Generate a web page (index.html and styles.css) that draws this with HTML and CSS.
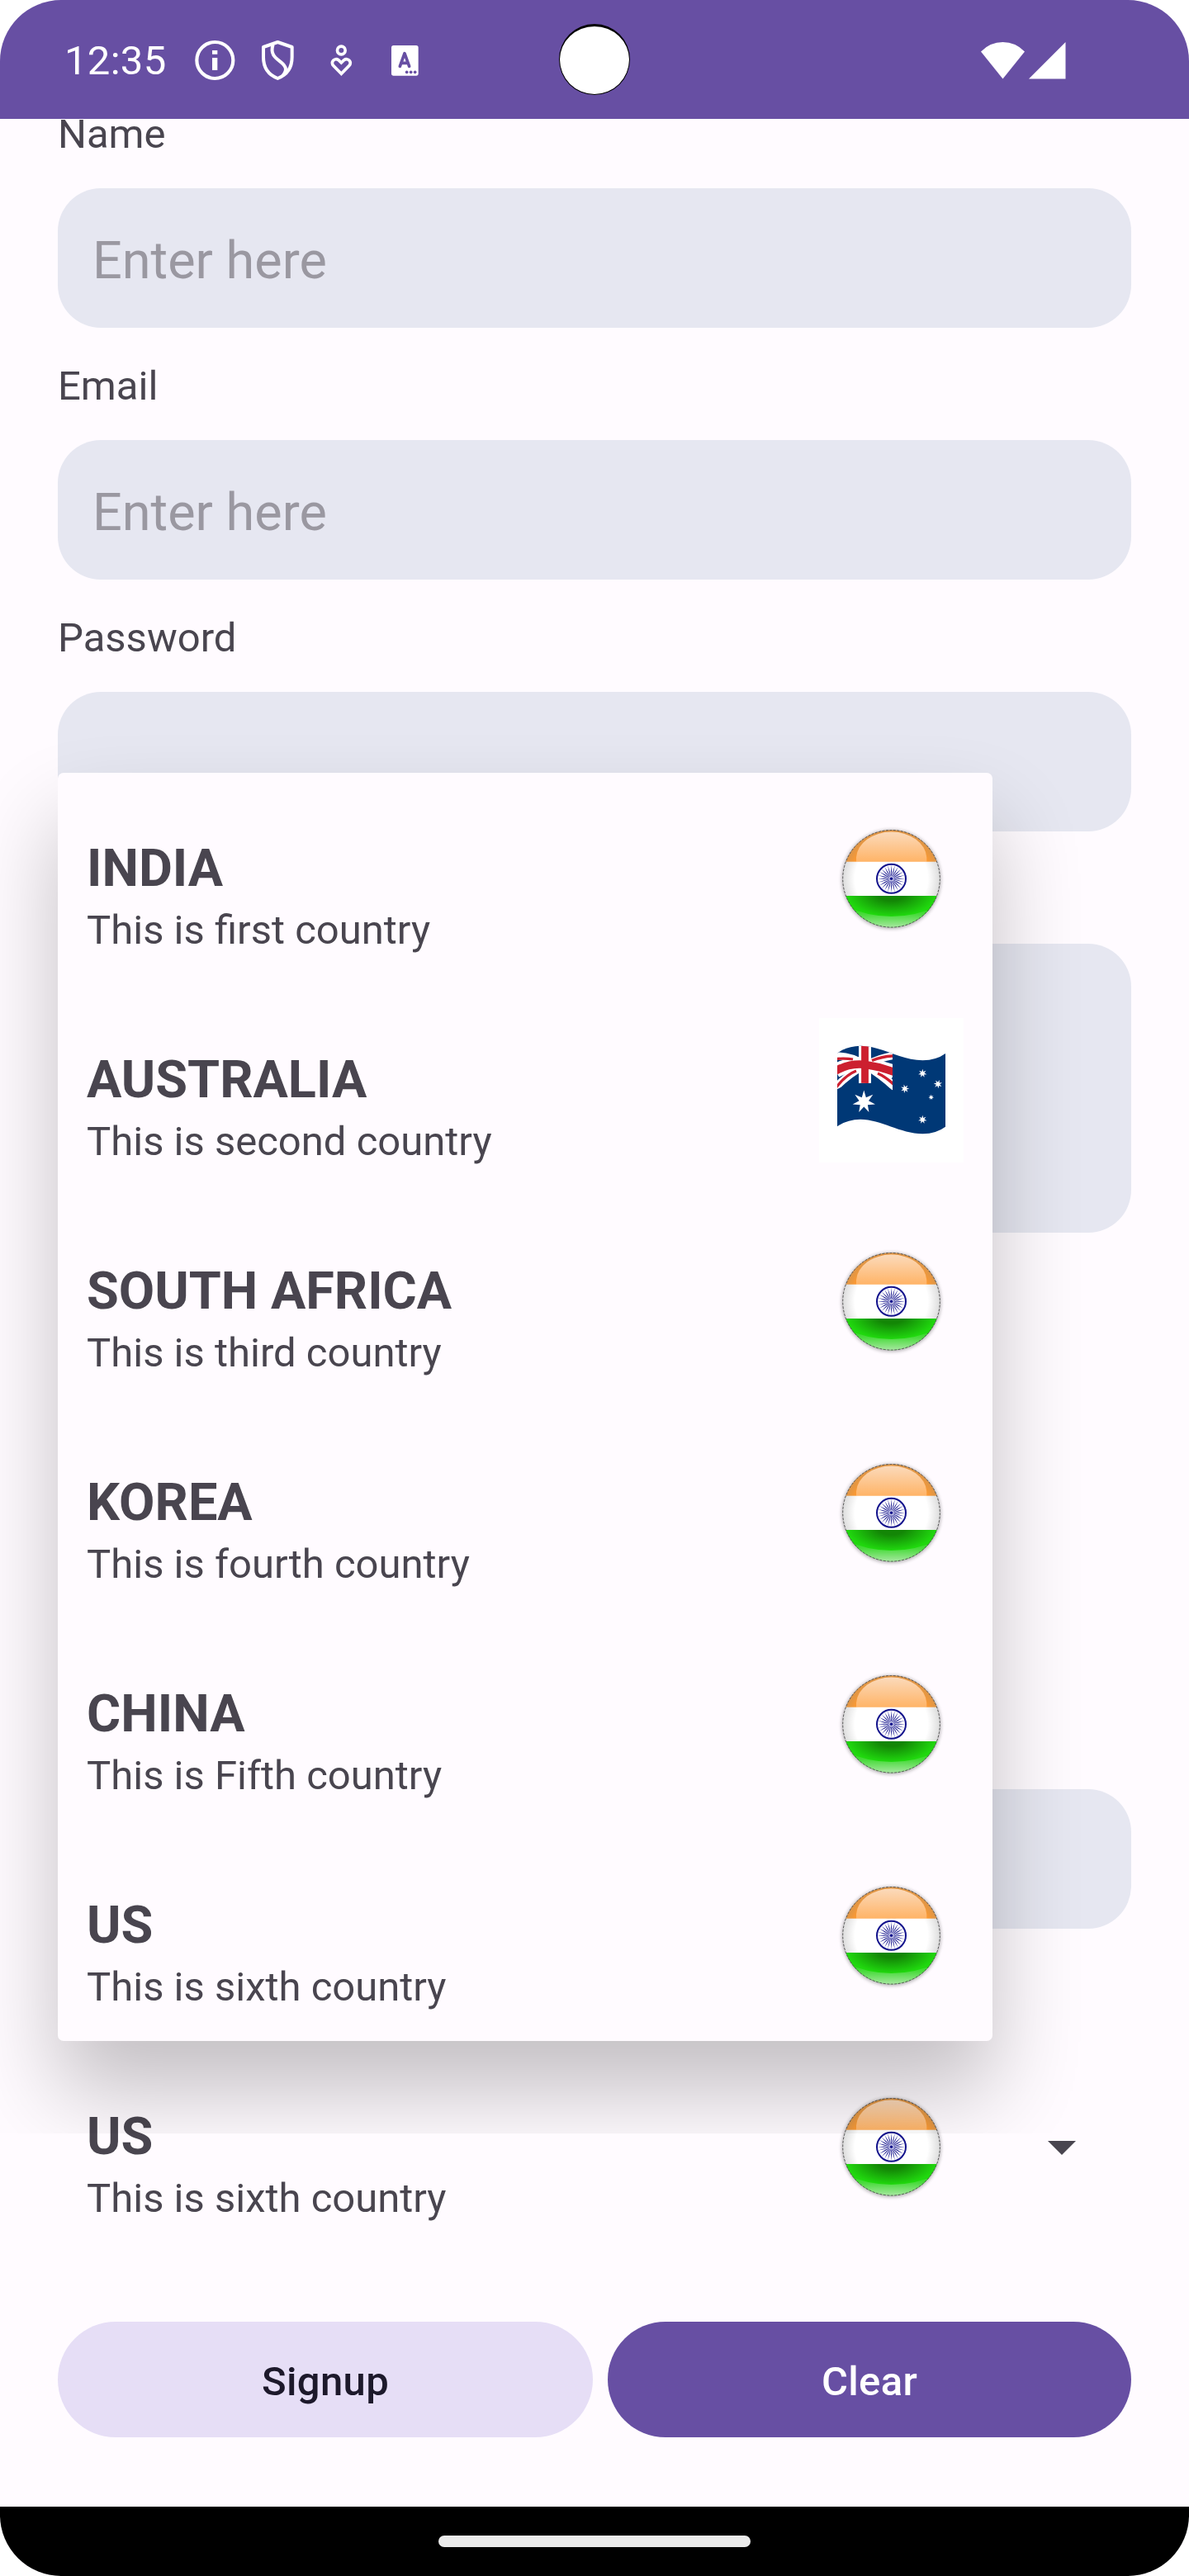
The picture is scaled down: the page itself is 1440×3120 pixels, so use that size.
FILE: index.html
```html
<!DOCTYPE html>
<html lang="en">
<head>
<meta charset="utf-8">
<title>Signup</title>
<link rel="stylesheet" href="styles.css">
</head>
<body>
<svg class="defs" width="0" height="0" aria-hidden="true">
  <defs>
    <linearGradient id="gloss" x1="0" y1="0" x2="0" y2="1"><stop offset="0" stop-color="#fbdabb"/><stop offset="1" stop-color="#ffb467"/></linearGradient>
    <radialGradient id="saffron" gradientUnits="userSpaceOnUse" cx="87.5" cy="87.3" r="59"><stop offset=".8" stop-color="#ff9a30"/><stop offset="1" stop-color="#dc9548"/></radialGradient>
    <radialGradient id="white" gradientUnits="userSpaceOnUse" cx="87.5" cy="87.3" r="59"><stop offset=".75" stop-color="#fff"/><stop offset="1" stop-color="#dcdcdc"/></radialGradient>
    <radialGradient id="green" gradientUnits="userSpaceOnUse" cx="0" cy="0" r="1" gradientTransform="translate(87.5 106) scale(54 27)"><stop offset=".3" stop-color="#138606"/><stop offset="1" stop-color="#20d80e"/></radialGradient>
    <linearGradient id="sheen" gradientUnits="userSpaceOnUse" x1="0" y1="120" x2="0" y2="147"><stop offset="0" stop-color="#22d610"/><stop offset=".4" stop-color="#4adb3d"/><stop offset="1" stop-color="#abe8a5"/></linearGradient>
    <filter id="halo" x="-20%" y="-20%" width="140%" height="140%"><feGaussianBlur stdDeviation="2"/></filter>
    <clipPath id="ball"><circle cx="87.5" cy="87.3" r="59"/></clipPath>
    <clipPath id="canton"><path d="M22 42.5Q34 34 50 33.8C64 33.8 76 38.5 89 43.3V87.5Q76 77 58 79Q40 77 22 86Z"/></clipPath>
    <path id="star7" d="M0-1L.182-.378.782-.623.409-.093.975.223.328.262.434.901 0 .42-.434.901-.328.262-.975.223-.409-.093-.782-.623-.182-.378Z"/>
    <path id="spokes" d="M0-17L.5-9 .15 0 .5 9 0 17-.5 9-.15 0-.5-9Z"/>
    <symbol id="india" viewBox="0 0 175 175">
      <circle cx="87.5" cy="88" r="60" fill="#000" opacity=".3" filter="url(#halo)"/>
      <g clip-path="url(#ball)">
        <rect x="28" y="28" width="120" height="39" fill="url(#saffron)"/>
        <path d="M45 66.7V61.5A42.7 32.5 0 0 1 130.3 61.5V66.7Z" fill="url(#gloss)"/>
        <rect x="28" y="66.7" width="120" height="41.5" fill="url(#white)"/>
        <rect x="28" y="108" width="120" height="40" fill="url(#green)"/>
        <path d="M28 119Q58 133 87.5 133T148 119V148H28Z" fill="url(#sheen)"/>
      </g>
      <circle cx="87.5" cy="87.3" r="58.8" fill="none" stroke="#555" stroke-width="1" stroke-dasharray="3 1.5"/>
      <g transform="translate(87.5 87.3)" fill="#12128c">
        <circle r="17.5" fill="none" stroke="#12128c" stroke-width="2"/>
        <circle r="4.5" fill="#c3c3e6"/>
        <use href="#spokes"/><use href="#spokes" transform="rotate(15)"/><use href="#spokes" transform="rotate(30)"/><use href="#spokes" transform="rotate(45)"/><use href="#spokes" transform="rotate(60)"/><use href="#spokes" transform="rotate(75)"/><use href="#spokes" transform="rotate(90)"/><use href="#spokes" transform="rotate(105)"/><use href="#spokes" transform="rotate(120)"/><use href="#spokes" transform="rotate(135)"/><use href="#spokes" transform="rotate(150)"/><use href="#spokes" transform="rotate(165)"/>
        <circle r="3.3" fill="#c3c3e6"/>
        <circle r="4" fill="none" stroke="#8f8fcc" stroke-width="1"/>
        <circle r="1.8"/>
      </g>
    </symbol>
    <symbol id="australia" viewBox="0 0 175 175">
      <rect width="175" height="175" fill="#fff"/>
      <path d="M22 42.5Q34 34 50 33.8C75 33.5 98 51 125.5 51.3Q142 51 153 43V131.7Q142 140 125.5 140.3C98 140 75 123 50 122.8Q34 123 22 131.3Z" fill="#003876"/>
      <g clip-path="url(#canton)" fill="none">
        <g stroke="#fff">
          <path d="M20 46Q38 45 56 57" stroke-width="9"/>
          <path d="M91 45.5Q76 47 56 57" stroke-width="9"/>
          <path d="M18 86Q35 68 56 57" stroke-width="9"/>
          <path d="M92 84Q75 68 56 57" stroke-width="10"/>
          <path d="M20 64Q38 54 56 56.5T91 65.5" stroke-width="17"/>
          <path d="M55.5 30V90" stroke-width="15"/>
        </g>
        <g stroke="#cc1f2f">
          <path d="M20 49.5Q32 48.5 41 50" stroke-width="3.2"/>
          <path d="M64 51.5Q76 46.5 90 46" stroke-width="3.5"/>
          <path d="M20 85Q32 69 45 64" stroke-width="3.2"/>
          <path d="M71 67Q80 71 90 80" stroke-width="3.5"/>
          <path d="M20 64Q38 54 56 56.5T91 65.5" stroke-width="9.6"/>
          <path d="M55.5 30V90" stroke-width="8.8"/>
        </g>
      </g>
      <g fill="#fff">
        <use href="#star7" transform="translate(54.3 101.5) scale(14)"/>
        <use href="#star7" transform="translate(125.3 67) scale(5.3)"/>
        <use href="#star7" transform="translate(144 80) rotate(20) scale(5.3)"/>
        <use href="#star7" transform="translate(104 85.7) rotate(-15) scale(5.3)"/>
        <use href="#star7" transform="translate(135.7 96) scale(3.4)"/>
        <use href="#star7" transform="translate(125.3 123) scale(5.3)"/>
      </g>
    </symbol>
  </defs>
</svg>

<div class="phone">
  <header class="status">
    <span class="clock">12:35</span>
    <svg class="sicon" viewBox="0 0 230 198">
      <circle cx="115" cy="99" r="66" fill="none" stroke="#fff" stroke-width="12.5"/>
      <path d="M105 63h19v14h-19zM105 90h19v45h-19z" fill="#fff"/>
    </svg>
    <svg class="sicon" viewBox="0 0 230 198">
      <g fill="none" stroke="#fff" stroke-width="12" stroke-linejoin="round">
        <path d="M115 33L167 51V88C167 125 149 152 115 165C81 152 63 125 63 88V51Z"/>
        <path d="M98 42C86 78 108 91 127 106C148 123 149 136 133 155"/>
      </g>
    </svg>
    <svg class="sicon" viewBox="0 0 230 198">
      <g fill="none" stroke="#fff" stroke-width="11">
        <circle cx="115" cy="63" r="14.5"/>
        <path d="M115 148L87 119C74 105 91 88 105 98L115 108L125 98C139 88 156 105 143 119Z"/>
      </g>
    </svg>
    <svg class="sicon" viewBox="0 0 230 198">
      <rect x="66" y="45" width="98" height="110" rx="8" fill="#fff"/>
      <path d="M97 121L114 74L131 121M102 109H126" fill="none" stroke="#674fa3" stroke-width="11" stroke-linecap="round" stroke-linejoin="round"/>
      <g fill="#674fa3"><circle cx="122" cy="142" r="5.5"/><circle cx="137" cy="142" r="5.5"/><circle cx="152" cy="142" r="5.5"/></g>
    </svg>
    <span class="camera"></span>
    <svg class="signal" viewBox="0 0 104 46" fill="#fff">
      <path d="M0 12.5Q11 1 26.5 1T53 12.5L26.5 45.5Z"/>
      <path d="M102.5 1V45.5H58Z"/>
    </svg>
  </header>

  <main class="form">
    <label class="label">Name</label>
    <div class="field">Enter here</div>
    <label class="label">Email</label>
    <div class="field">Enter here</div>
    <label class="label">Password</label>
    <div class="field"></div>
    <div class="field area"></div>
    <div class="field lower"></div>

    <div class="country spinner">
      <div class="words"><div class="title">US</div><div class="sub">This is sixth country</div></div>
      <svg class="flag"><use href="#india"/></svg>
      <svg class="arrow" viewBox="0 0 34 17"><path d="M0 0H34L17 17Z" fill="#49454f"/></svg>
    </div>

    <div class="actions">
      <button class="btn tonal">Signup</button>
      <button class="btn filled">Clear</button>
    </div>

    <div class="popup">
      <div class="country"><div class="words"><div class="title">INDIA</div><div class="sub">This is first country</div></div><svg class="flag"><use href="#india"/></svg></div>
      <div class="country"><div class="words"><div class="title">AUSTRALIA</div><div class="sub">This is second country</div></div><svg class="flag"><use href="#australia"/></svg></div>
      <div class="country"><div class="words"><div class="title">SOUTH AFRICA</div><div class="sub">This is third country</div></div><svg class="flag"><use href="#india"/></svg></div>
      <div class="country"><div class="words"><div class="title">KOREA</div><div class="sub">This is fourth country</div></div><svg class="flag"><use href="#india"/></svg></div>
      <div class="country"><div class="words"><div class="title">CHINA</div><div class="sub">This is Fifth country</div></div><svg class="flag"><use href="#india"/></svg></div>
      <div class="country"><div class="words"><div class="title">US</div><div class="sub">This is sixth country</div></div><svg class="flag"><use href="#india"/></svg></div>
    </div>
  </main>

  <footer class="nav"><span class="handle"></span></footer>
</div>
</body>
</html>
```

FILE: styles.css
```css
* { box-sizing: border-box; }

body {
  margin: 0;
  background: #fff;
  font-family: Roboto, "Liberation Sans", sans-serif;
  color: #49454f;
}

.defs { position: absolute; }
svg { display: block; flex: none; }

.phone {
  width: 1440px;
  height: 3120px;
  display: flex;
  flex-direction: column;
  overflow: hidden;
  border-radius: 74px;
  background: #fffbff;
}

/* status bar */
.status {
  position: relative;
  z-index: 2;
  flex: none;
  height: 144px;
  display: flex;
  align-items: center;
  padding: 2px 148px 0 78px;
  background: #674fa3;
  color: #fff;
}
.clock { width: 143.67px; padding-top: 2px; font-size: 49px; line-height: 58px; letter-spacing: .3px; }
.sicon { width: 76.67px; height: 66px; }
.signal { width: 104px; height: 46px; margin-left: auto; }
.camera {
  position: absolute;
  left: 677px;
  top: 29px;
  width: 86px;
  height: 86px;
  border: 1.5px solid #000;
  border-top-width: 3px;
  border-radius: 50%;
  background: #fff;
}

/* form */
.form {
  position: relative;
  flex: 1;
  display: flex;
  flex-direction: column;
  padding: 0 70px;
}
.label {
  margin-bottom: 36px;
  font-size: 49px;
  line-height: 58px;
}
.label:first-child { margin-top: -10px; }
.field {
  flex: none;
  height: 169px;
  margin-bottom: 42px;
  padding: 51px 42px 0;
  border-radius: 52px;
  background: #e6e7f1;
  color: #9a98a1;
  font-size: 63px;
  line-height: 74px;
}
.area { height: 350px; margin: 94px 0 0; }
.lower { margin: 674px 0 136px; }

.country {
  flex: none;
  height: 256px;
  display: flex;
  align-items: flex-start;
  padding-left: 35px;
}
.words { width: 887px; padding-top: 79px; }
.title { font-size: 63px; line-height: 74px; font-weight: 700; }
.sub { margin-top: 9px; font-size: 49px; line-height: 58px; }
.flag { width: 175px; height: 175px; margin-top: 41px; }
.arrow { width: 34px; height: 17px; margin: 121px 0 0 102px; }

.actions { display: flex; gap: 18px; margin-top: 84px; }
.btn {
  height: 140px;
  padding: 5px 0 0;
  border: 0;
  border-radius: 70px;
  font: 500 49px/58px Roboto, "Liberation Sans", sans-serif;
  letter-spacing: .35px;
}
.tonal { width: 648px; background: #e6def6; color: #1d192b; }
.filled { width: 634px; background: #674fa3; color: #fff; }

/* dropdown list over the form; its shadow is cut off below */
.popup {
  position: absolute;
  left: 70px;
  top: 792px;
  width: 1132px;
  border-radius: 7px;
  background: #fffbff;
  box-shadow: 0 61px 106px rgba(0, 0, 0, .24);
  clip-path: inset(-112px);
}

/* gesture bar */
.nav {
  flex: none;
  height: 84px;
  display: flex;
  justify-content: center;
  padding-top: 35px;
  background: #000;
}
.handle { width: 378px; height: 14px; border-radius: 7px; background: #ebebeb; }
```
